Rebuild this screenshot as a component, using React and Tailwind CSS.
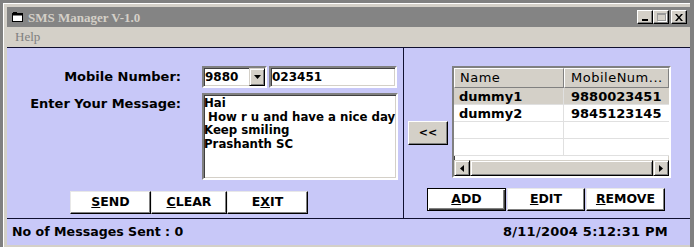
import React from "react";

const font = { fontFamily: '"DejaVu Sans", Verdana, sans-serif' };

function WinBtn({ children, className = "", def = false }) {
  return (
    <div
      className={
        "flex items-center justify-center bg-white text-[12.5px] font-bold text-black leading-none " +
        (def
          ? "border border-black shadow-[inset_1px_1px_0_#fff,inset_-1px_-1px_0_#404040,inset_-2px_-2px_0_#808080]"
          : "border border-t-[#e8e8e8] border-l-[#e8e8e8] border-r-black border-b-black shadow-[inset_-1px_-1px_0_#808080]") +
        " " +
        className
      }
    >
      {children}
    </div>
  );
}

const sunken =
  "border-2 border-t-[#808080] border-l-[#808080] border-r-white border-b-white shadow-[inset_1px_1px_0_#404040,inset_-1px_-1px_0_#d4d0c8]";

export default function App() {
  return (
    <div className="w-[694px] h-[247px] bg-[#808080] pl-[3px] pt-[3px] overflow-hidden" style={font}>
      <div className="w-[687px] h-[244px] border-l border-t border-white bg-[#d4d0c8] pl-[3px] pt-[3px] pb-[2px] flex flex-col">
        {/* Title bar */}
        <div className="h-[20px] bg-[#848484] flex items-center pl-[5px] pr-[3px]">
          <svg width="11" height="10" viewBox="0 0 11 10" className="shrink-0">
            <rect x="0.5" y="1.5" width="10" height="8" fill="#fff" stroke="#000" />
            <rect x="0.5" y="1.5" width="10" height="2" fill="#000" />
            <rect x="1" y="0" width="4" height="2" fill="#000" />
          </svg>
          <span
            className="ml-[5px] text-[13px] font-bold text-[#d4d0c8] leading-none"
            style={{ fontFamily: '"Liberation Serif", "Times New Roman", serif' }}
          >
            SMS Manager V-1.0
          </span>
          <div className="ml-auto flex items-center">
            <div className="w-[16px] h-[14px] bg-[#d4d0c8] border border-t-white border-l-white border-r-black border-b-black shadow-[inset_-1px_-1px_0_#808080] flex items-end justify-center pb-[2px]">
              <div className="w-[6px] h-[2px] bg-black" />
            </div>
            <div className="w-[16px] h-[14px] bg-[#d4d0c8] border border-t-white border-l-white border-r-black border-b-black shadow-[inset_-1px_-1px_0_#808080] flex items-center justify-center">
              <div className="w-[9px] h-[8px] border border-[#9a9a9a] border-t-2 shadow-[1px_1px_0_#fff]" />
            </div>
            <div className="ml-[2px] w-[16px] h-[14px] bg-[#d4d0c8] border border-t-white border-l-white border-r-black border-b-black shadow-[inset_-1px_-1px_0_#808080] flex items-center justify-center">
              <svg width="8" height="7" viewBox="0 0 8 7">
                <path d="M0 0h2l2 2.5L6 0h2L5 3.5 8 7H6L4 4.5 2 7H0l3-3.5z" fill="#000" />
              </svg>
            </div>
          </div>
        </div>
        {/* Menu bar */}
        <div
          className="h-[20px] flex items-center pl-[8px] text-[13px] text-[#808080]"
          style={{ fontFamily: '"Liberation Serif", "Times New Roman", serif' }}
        >
          Help
        </div>
        {/* Content */}
        <div className="border-t border-[#101030] bg-[#c8c8f8] flex flex-col flex-1">
          <div className="flex h-[170px]">
            {/* Left panel */}
            <div className="w-[396px] flex flex-col pt-[18px] font-bold text-black">
              <div className="flex items-center h-[22px]">
                <div className="w-[174px] text-right text-[13px]">Mobile Number:</div>
                <div className={"ml-[21px] w-[65px] h-[22px] bg-white flex items-center text-[12px] " + sunken}>
                  <span className="pl-[1px] font-bold">9880</span>
                  <div className="ml-auto mr-0 w-[16px] h-[18px] bg-[#d4d0c8] border border-t-[#d4d0c8] border-l-[#d4d0c8] border-r-black border-b-black shadow-[inset_1px_1px_0_#fff,inset_-1px_-1px_0_#808080] flex items-center justify-center">
                    <svg width="7" height="4" viewBox="0 0 7 4">
                      <path d="M0 0h7L3.5 4z" fill="#000" />
                    </svg>
                  </div>
                </div>
                <div className={"ml-[2px] w-[128px] h-[22px] bg-white flex items-center pl-[1px] text-[12px] " + sunken}>
                  023451
                </div>
              </div>
              <div className="flex items-start mt-[5px]">
                <div className="w-[174px] text-right pt-[1px] text-[13px]">Enter Your Message:</div>
                <div className={"ml-[21px] w-[196px] h-[87px] bg-white text-[11.75px] leading-[13.7px] pl-[0px] pt-[2px] whitespace-pre overflow-hidden " + sunken}>
                  {"Hai\n How r u and have a nice day\nKeep smiling\nPrashanth SC"}
                </div>
              </div>
              <div className="flex mt-[11px] pl-[63px]">
                <WinBtn className="w-[81px] h-[23px]">
                  <span><u>S</u>END</span>
                </WinBtn>
                <WinBtn className="w-[76px] h-[23px]">
                  <span><u>C</u>LEAR</span>
                </WinBtn>
                <WinBtn className="w-[81px] h-[23px]">
                  <span>E<u>X</u>IT</span>
                </WinBtn>
              </div>
            </div>
            {/* Divider */}
            <div className="w-px bg-[#101030]" />
            {/* Right panel */}
            <div className="flex-1 flex flex-col pt-[18px]">
              <div className="flex items-start">
                <div className="ml-[4px] mt-[55px] w-[40px] h-[24px] bg-[#d4d0c8] border border-t-white border-l-white border-r-black border-b-black shadow-[inset_-1px_-1px_0_#808080] flex items-center justify-center text-[11px] font-bold text-black">
                  &lt;&lt;
                </div>
                <div className={"ml-[4px] w-[219px] h-[112px] bg-white flex flex-col overflow-hidden " + sunken}>
                  <div className="flex h-[20px] text-[13px] tracking-[0.5px] text-black">
                    <div className="w-[110px] bg-[#d4d0c8] border border-t-white border-l-white border-r-[#808080] border-b-[#808080] pl-[5px] flex items-center">
                      Name
                    </div>
                    <div className="flex-1 bg-[#d4d0c8] border border-t-white border-l-white border-r-[#808080] border-b-[#808080] pl-[6px] flex items-center whitespace-nowrap">
                      MobileNum...
                    </div>
                  </div>
                  {[
                    ["dummy1", "9880023451", true],
                    ["dummy2", "9845123145", false],
                    ["", "", false],
                    ["", "", false],
                  ].map(([n, m, sel], i) => (
                    <div
                      key={i}
                      className={
                        "flex h-[17px] text-[13px] font-bold text-black border-b border-[#e0e0e0] leading-none " +
                        (sel ? "bg-[#d4d0c8]" : "bg-white")
                      }
                    >
                      <div className="w-[110px] pl-[5px] flex items-center border-r border-[#e0e0e0]">{n}</div>
                      <div className="flex-1 pl-[7px] flex items-center">{m}</div>
                    </div>
                  ))}
                  <div className="mt-auto h-[16px] flex bg-[#e8e6e0]">
                    <div className="w-[16px] h-[16px] bg-[#d4d0c8] border border-t-[#d4d0c8] border-l-[#d4d0c8] border-r-black border-b-black shadow-[inset_1px_1px_0_#fff,inset_-1px_-1px_0_#808080] flex items-center justify-center">
                      <svg width="4" height="7" viewBox="0 0 4 7"><path d="M4 0v7L0 3.5z" fill="#000" /></svg>
                    </div>
                    <div className="flex-1 h-[16px] bg-[#d4d0c8] border border-t-[#d4d0c8] border-l-[#d4d0c8] border-r-black border-b-black shadow-[inset_1px_1px_0_#fff,inset_-1px_-1px_0_#808080]" />
                    <div className="w-[16px] h-[16px] bg-[#d4d0c8] border border-t-[#d4d0c8] border-l-[#d4d0c8] border-r-black border-b-black shadow-[inset_1px_1px_0_#fff,inset_-1px_-1px_0_#808080] flex items-center justify-center">
                      <svg width="4" height="7" viewBox="0 0 4 7"><path d="M0 0v7L4 3.5z" fill="#000" /></svg>
                    </div>
                  </div>
                </div>
              </div>
              <div className="flex mt-[10px] pl-[23px]">
                <WinBtn def className="w-[79px] h-[23px]">
                  <span><u>A</u>DD</span>
                </WinBtn>
                <WinBtn className="ml-[1px] w-[78px] h-[23px]">
                  <span><u>E</u>DIT</span>
                </WinBtn>
                <WinBtn className="ml-[1px] w-[79px] h-[23px]">
                  <span><u>R</u>EMOVE</span>
                </WinBtn>
              </div>
            </div>
          </div>
          {/* Status bar */}
          <div className="border-t border-[#101030] flex-1 flex items-center justify-between pl-[5px] pr-[22px] font-bold text-black">
            <span className="text-[12.6px]">No of Messages Sent : 0</span>
            <span className="text-[13px] tracking-[0.25px]">8/11/2004 5:12:31 PM</span>
          </div>
        </div>
      </div>
    </div>
  );
}
